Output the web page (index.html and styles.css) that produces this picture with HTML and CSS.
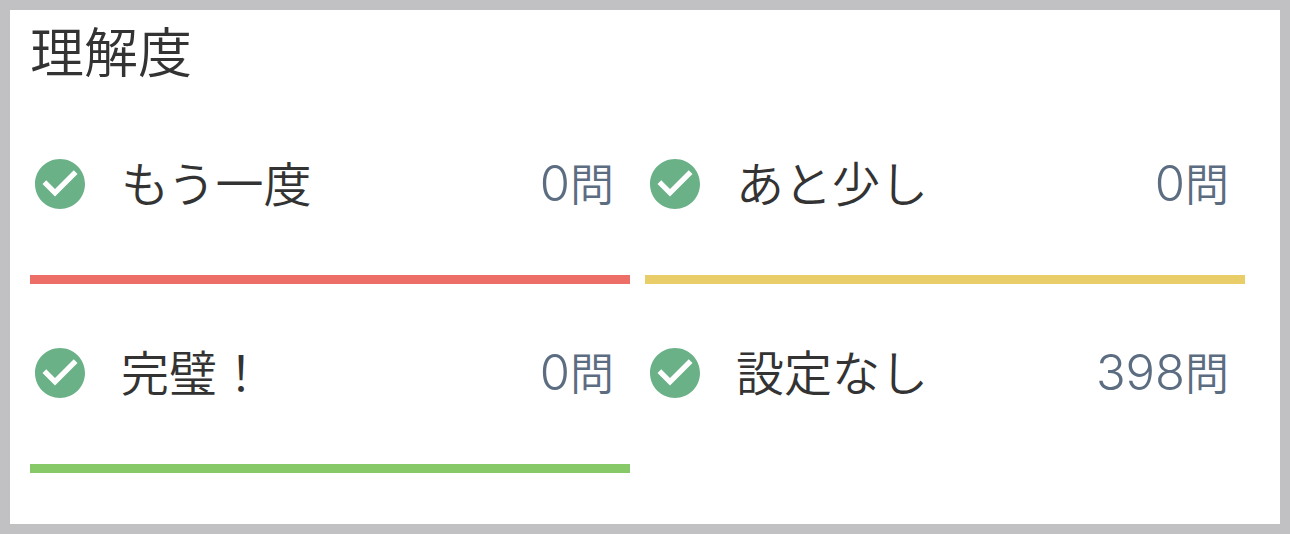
FILE: index.html
```html
<!DOCTYPE html>
<html lang="ja">
<head>
  <meta charset="UTF-8" />
  <meta name="viewport" content="width=device-width, initial-scale=1.0"/>
  <title>理解度</title>
  <link rel="stylesheet" href="styles.css">
</head>
<body>
  <div class="panel">
    <h2>理解度</h2>
    <div class="level-grid">
      <label class="level level-again">
        <input type="checkbox" class="level-check" checked />
        <svg class="check-icon" viewBox="0 0 24 24" aria-hidden="true"><path d="M12 2C6.48 2 2 6.48 2 12s4.48 10 10 10 10-4.48 10-10S17.52 2 12 2zm-2 15l-5-5 1.5-1.5L10 14l7.5-7.5L19 8l-9 9z"/></svg>
        <span class="level-name">もう一度</span>
        <span class="level-count"><span class="number">0</span>問</span>
      </label>
      <label class="level level-almost">
        <input type="checkbox" class="level-check" checked />
        <svg class="check-icon" viewBox="0 0 24 24" aria-hidden="true"><path d="M12 2C6.48 2 2 6.48 2 12s4.48 10 10 10 10-4.48 10-10S17.52 2 12 2zm-2 15l-5-5 1.5-1.5L10 14l7.5-7.5L19 8l-9 9z"/></svg>
        <span class="level-name">あと少し</span>
        <span class="level-count"><span class="number">0</span>問</span>
      </label>
      <label class="level level-perfect">
        <input type="checkbox" class="level-check" checked />
        <svg class="check-icon" viewBox="0 0 24 24" aria-hidden="true"><path d="M12 2C6.48 2 2 6.48 2 12s4.48 10 10 10 10-4.48 10-10S17.52 2 12 2zm-2 15l-5-5 1.5-1.5L10 14l7.5-7.5L19 8l-9 9z"/></svg>
        <span class="level-name">完璧！</span>
        <span class="level-count"><span class="number">0</span>問</span>
      </label>
      <label class="level">
        <input type="checkbox" class="level-check" checked />
        <svg class="check-icon" viewBox="0 0 24 24" aria-hidden="true"><path d="M12 2C6.48 2 2 6.48 2 12s4.48 10 10 10 10-4.48 10-10S17.52 2 12 2zm-2 15l-5-5 1.5-1.5L10 14l7.5-7.5L19 8l-9 9z"/></svg>
        <span class="level-name">設定なし</span>
        <span class="level-count"><span class="number">398</span>問</span>
      </label>
    </div>
  </div>
</body>
</html>
```

FILE: styles.css
```css
* {
  box-sizing: border-box;
}
body {
  margin: 0;
  font-family: "Noto Sans CJK JP", sans-serif;
  font-weight: 350;
  color: #333;
  background-color: #fff;
}
.panel {
  min-height: 100vh;
  padding: 8px 35px 0 20px;
  border: 10px solid #c1c1c3;
}
.panel h2 {
  margin: 0 0 13px;
  font-size: 54px;
  font-weight: 350;
  line-height: 64px;
}
.level-grid {
  display: grid;
  grid-template-columns: 1fr 1fr;
  column-gap: 15px;
}
.level {
  position: relative;
  display: flex;
  align-items: center;
  height: 189px;
  padding: 0 16px 2px 0;
  border-bottom: 9px solid transparent;
  cursor: pointer;
}
.level-again {
  border-bottom-color: #ed6d67;
}
.level-almost {
  border-bottom-color: #e9cd68;
}
.level-perfect {
  border-bottom-color: #87c969;
}

/* Native box is hidden, the icon shows the state */
.level-check {
  position: absolute;
  opacity: 0;
}
.check-icon {
  width: 60px;
  height: 60px;
  fill: #ccc;
}
.level-check:checked + .check-icon {
  fill: #6ab187;
}
.level-name {
  flex: 1;
  margin-left: 31px;
  padding-bottom: 6px;
  font-size: 48px;
  line-height: 60px;
}
.level-count {
  padding-bottom: 3px;
  font-size: 44px;
  line-height: 60px;
  color: #5c6d82;
}
.number {
  font-family: Inter, sans-serif;
  font-size: 49px;
  font-weight: 300;
}
```
